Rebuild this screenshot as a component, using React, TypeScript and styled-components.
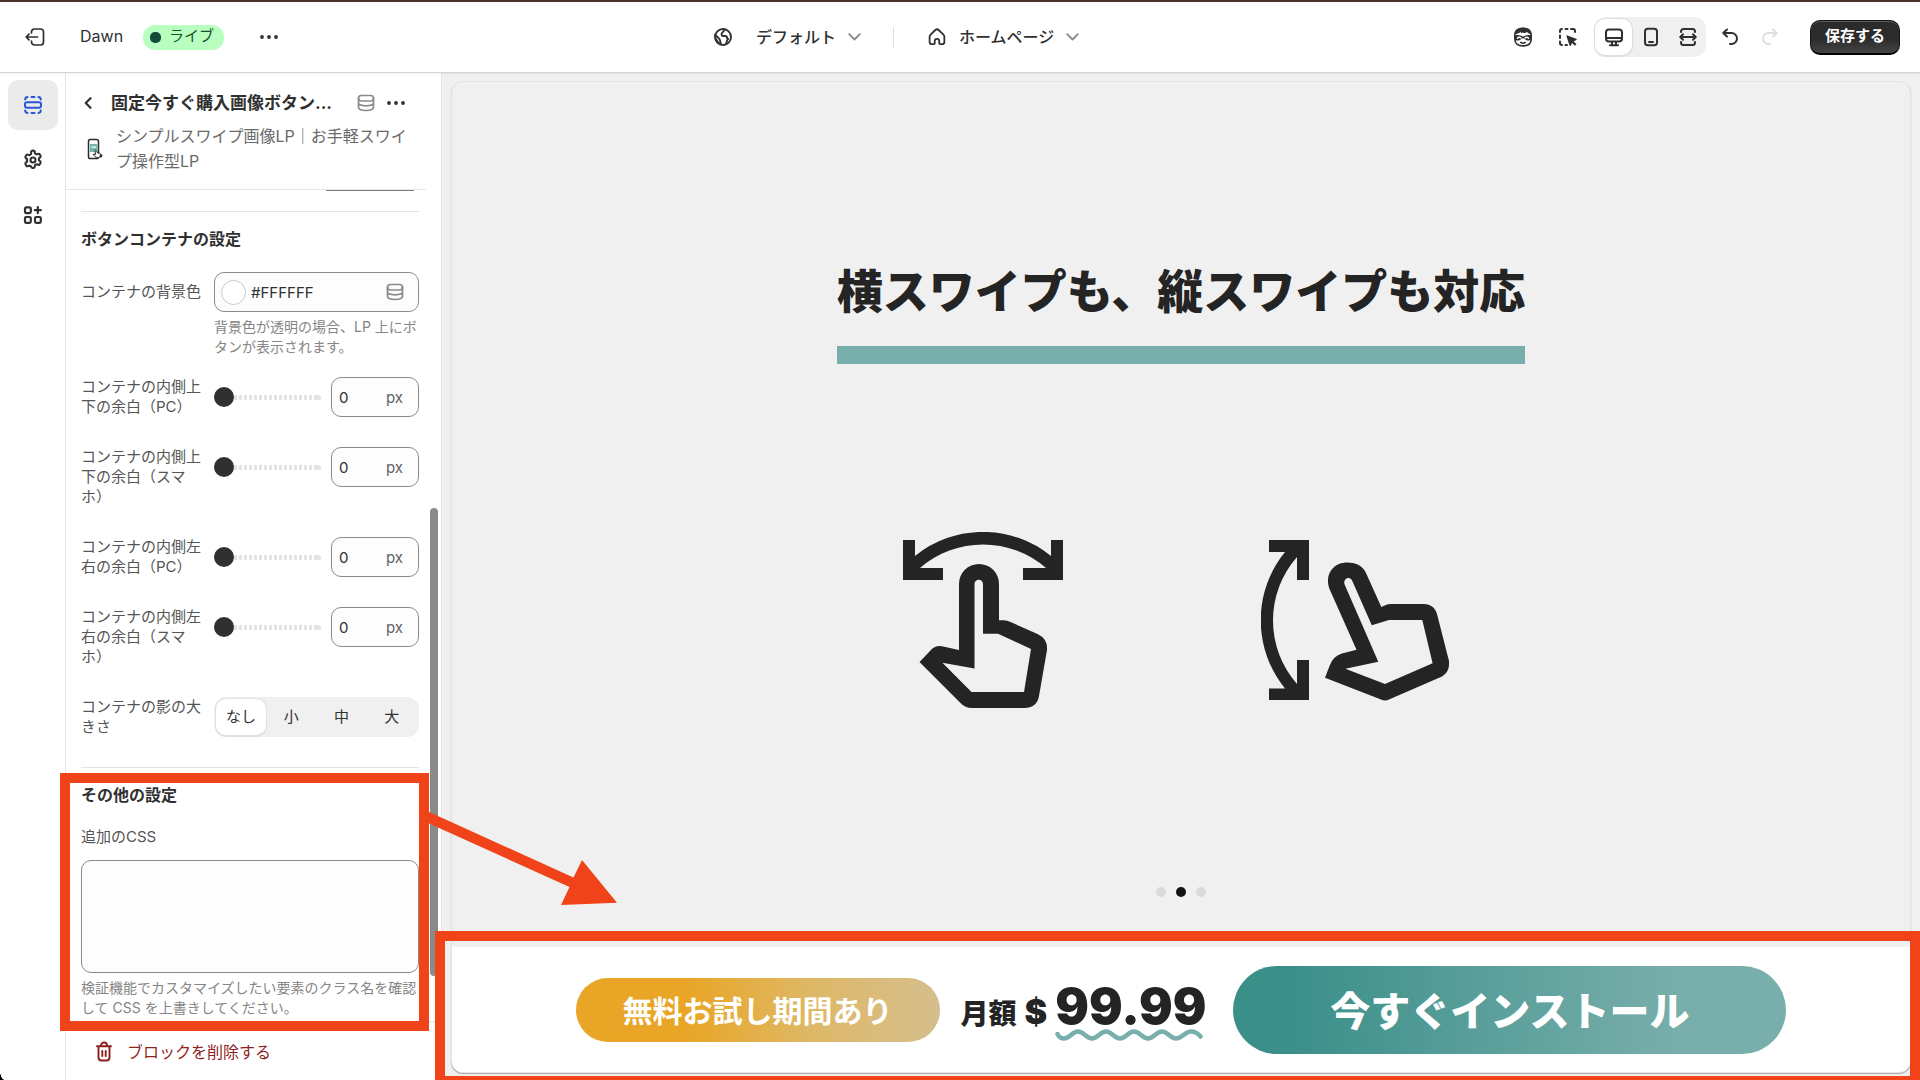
import React, { useState } from "react";
import styled, { createGlobalStyle, css } from "styled-components";

const GlobalStyle = createGlobalStyle`
  *, *::before, *::after { box-sizing: border-box; }
  body {
    margin: 0;
    background: #fff;
    color: #303030;
    font-family: Inter, "Noto Sans CJK JP", sans-serif;
    font-size: 15px;
    overflow: hidden;
  }
  button, input, textarea { font: inherit; color: inherit; }
  svg { display: block; flex: none; }
`;

const Shell = styled.div`
  height: 100vh;
  display: flex;
  flex-direction: column;
  position: relative;
  &::after {
    content: "";
    position: absolute;
    left: 0;
    bottom: 0;
    width: 5px;
    height: 9px;
    background: radial-gradient(ellipse at 100% 0, transparent 68%, #000 72%);
  }
`;

/* ---------- top bar ---------- */
const TopBar = styled.header`
  flex: none;
  height: 73px;
  padding: 0 20px 0 25px;
  display: flex;
  align-items: center;
  justify-content: space-between;
  border-top: 2px solid #4b302b;
  border-bottom: 1px solid #d4d4d4;
  box-shadow: 0 1px 2px rgba(0, 0, 0, 0.06);
  background: #fff;
  z-index: 1;
`;

const BarGroup = styled.div<{ $gap?: number }>`
  display: flex;
  align-items: center;
  gap: ${(p) => p.$gap ?? 0}px;
`;

const IconButton = styled.button<{ $w?: number; $tone?: string }>`
  width: ${(p) => p.$w ?? 20}px;
  height: 30px;
  padding: 0;
  border: 0;
  background: none;
  display: flex;
  align-items: center;
  justify-content: center;
  color: ${(p) => p.$tone ?? "#303030"};
  cursor: pointer;
`;

const ThemeName = styled.span`
  margin-left: 35px;
  padding-bottom: 2px;
  font-size: 16px;
  line-height: 24px;
`;

const LiveBadge = styled.span`
  margin: 0 35px 0 20px;
  height: 25px;
  padding: 0 10px 2px 7px;
  border-radius: 12px;
  background: #b9ffbf;
  color: #14532d;
  display: flex;
  align-items: center;
  gap: 8px;
  font-size: 15px;
  line-height: 24px;
  &::before {
    content: "";
    width: 11px;
    height: 11px;
    margin-top: 2px;
    border-radius: 5px;
    background: #124a3c;
  }
`;

const Picker = styled.button`
  padding: 0;
  border: 0;
  background: none;
  display: flex;
  align-items: center;
  font-size: 16px;
  font-weight: 500;
  line-height: 24px;
  cursor: pointer;
`;

const PickerLabel = styled.span<{ $left: number }>`
  margin: 0 12px 0 ${(p) => p.$left}px;
`;

const BarRule = styled.span`
  width: 1px;
  height: 20px;
  margin: 0 34px 0 32px;
  background: #e0e0e0;
`;

const DeviceGroup = styled.div`
  height: 40px;
  margin: 0 14px 0 17px;
  border-radius: 12px;
  background: #f0f0f0;
  display: flex;
  align-items: center;
`;

const DeviceButton = styled.button<{ $on?: boolean }>`
  width: 37px;
  height: 36px;
  padding: 0;
  border: 0;
  border-radius: 10px;
  background: none;
  display: flex;
  align-items: center;
  justify-content: center;
  ${(p) => p.$on && css`
    background: #fff;
    box-shadow: 0 0 0 1px #dedede, 0 1px 2px rgba(0, 0, 0, 0.25);
  `}
`;

const SaveButton = styled.button`
  width: 90px;
  height: 35px;
  margin-left: 30px;
  padding: 0 0 2px;
  border: 1px solid #161616;
  border-bottom: 2px solid #000;
  border-radius: 10px;
  background: linear-gradient(#2b2b2b 55%, #444);
  box-shadow: inset 0 1px 0 #5a5a5a;
  color: #fff;
  font-size: 15px;
  font-weight: 700;
  line-height: 24px;
`;

/* ---------- body ---------- */
const Body = styled.div`
  flex: 1;
  min-height: 0;
  display: flex;
`;

const Rail = styled.nav`
  flex: none;
  width: 66px;
  padding: 7px 7px 0 8px;
  display: flex;
  flex-direction: column;
  gap: 5px;
  border-right: 1px solid #e3e3e3;
`;

const RailButton = styled.button<{ $on?: boolean }>`
  width: 50px;
  height: 50px;
  padding: 0;
  border: 0;
  border-radius: 10px;
  background: ${(p) => (p.$on ? "#ebebeb" : "none")};
  color: ${(p) => (p.$on ? "#2a56d8" : "#303030")};
  display: flex;
  align-items: center;
  justify-content: center;
`;

const Panel = styled.aside`
  flex: none;
  width: 376px;
  display: flex;
  flex-direction: column;
  border-right: 1px solid #e3e3e3;
`;

const PanelHead = styled.div`
  flex: none;
  height: 117px;
  margin-right: 15px;
  padding: 15px 20px 0 15px;
  border-bottom: 1px solid #e6e6e6;
`;

const TitleRow = styled.div`
  display: flex;
  align-items: center;
  height: 30px;
`;

const PanelTitle = styled.h1`
  flex: 1;
  margin: 0 0 0 15px;
  font-size: 17px;
  font-weight: 700;
  line-height: 30px;
  white-space: nowrap;
`;

const AppRow = styled.div`
  display: flex;
  align-items: center;
  gap: 13px;
  padding-left: 6px;
  margin-top: 6px;
  font-size: 16px;
  line-height: 25px;
  color: #6a6a6a;
  white-space: nowrap;
`;

const PanelScroll = styled.div`
  flex: 1;
  min-height: 0;
  padding: 0 22px 0 15px;
  position: relative;
`;

const ScrollThumb = styled.div`
  position: absolute;
  top: 318px;
  right: 3px;
  width: 8px;
  height: 468px;
  border-radius: 4px;
  background: #8a8a8a;
`;

const PreviousField = styled.div`
  width: 88px;
  height: 1px;
  margin-left: auto;
  margin-right: 5px;
  background: #7d7d7d;
`;

const Section = styled.section<{ $top: number }>`
  margin-top: ${(p) => p.$top}px;
  padding-top: 15px;
  border-top: 1px solid #e3e3e3;
`;

const SectionTitle = styled.h2`
  margin: 0;
  font-size: 16px;
  font-weight: 700;
  line-height: 24px;
`;

const Field = styled.div<{ $first?: boolean }>`
  display: grid;
  grid-template-columns: 133px minmax(0, 1fr);
  align-items: start;
  margin-top: ${(p) => (p.$first ? 21 : 0)}px;
  margin-bottom: ${(p) => (p.$first ? 20 : 30)}px;
`;

const FieldLabel = styled.label<{ $single?: boolean }>`
  line-height: ${(p) => (p.$single ? 40 : 20)}px;
  color: #555;
  white-space: pre-line;
`;

const Help = styled.p`
  margin: 5px 0 0;
  font-size: 14px;
  line-height: 20px;
  color: #858585;
  white-space: pre;
`;

const inputBox = css`
  border: 1px solid #8a8a8a;
  border-radius: 10px;
  background: #fdfdfd;
`;

const ColorBox = styled.div`
  ${inputBox}
  height: 40px;
  padding: 0 14px 0 6px;
  display: flex;
  align-items: center;
  gap: 5px;
  color: #8a8a8a;
`;

const Swatch = styled.span`
  flex: none;
  width: 25px;
  height: 25px;
  border: 1px solid #c9c9c9;
  border-radius: 50%;
  background: #fff;
`;

const BareInput = styled.input`
  flex: 1;
  min-width: 0;
  width: 0;
  padding: 0;
  border: 0;
  outline: 0;
  background: none;
  color: #303030;
`;

const SliderRow = styled.div`
  display: flex;
  align-items: center;
  gap: 10px;
`;

const Slider = styled.input`
  appearance: none;
  flex: 1;
  width: 0;
  min-width: 0;
  height: 20px;
  margin: 0;
  background: none;
  &::-webkit-slider-runnable-track {
    height: 5px;
    border-radius: 0 3px 3px 0;
    background:
      linear-gradient(#e3e3e3, #e3e3e3) right / 7px 5px no-repeat,
      repeating-linear-gradient(to right, #e3e3e3 0 3px, transparent 3px 5px);
  }
  &::-webkit-slider-thumb {
    appearance: none;
    width: 20px;
    height: 20px;
    margin-top: -8px;
    border-radius: 50%;
    background: #303030;
  }
`;

const NumberBox = styled.div`
  ${inputBox}
  flex: none;
  width: 88px;
  height: 40px;
  padding: 0 15px 0 7px;
  display: flex;
  align-items: center;
  color: #616161;
`;

const Segments = styled.div`
  height: 40px;
  padding: 2px;
  border-radius: 12px;
  background: #f0f0f0;
  display: flex;
`;

const Segment = styled.button<{ $on?: boolean }>`
  flex: 1;
  height: 36px;
  padding: 0 0 4px;
  border: 0;
  border-radius: 10px;
  background: none;
  font-size: 15px;
  ${(p) => p.$on && css`
    background: #fff;
    box-shadow: 0 0 0 1px #e2e2e2, 0 1px 2px rgba(0, 0, 0, 0.25);
  `}
`;

const CssLabel = styled.label`
  display: block;
  margin-top: 20px;
  line-height: 20px;
  color: #555;
`;

const CssArea = styled.textarea`
  ${inputBox}
  display: block;
  width: 100%;
  height: 113px;
  margin-top: 13px;
  padding: 8px;
  resize: none;
`;

const PanelFoot = styled.div`
  flex: none;
  height: 59px;
  border-top: 1px solid #e6e6e6;
  padding: 2px 29px 0;
  display: flex;
  align-items: center;
`;

const DeleteButton = styled.button`
  padding: 0;
  border: 0;
  background: none;
  display: flex;
  align-items: center;
  gap: 14px;
  color: #8e1f1f;
  font-size: 16px;
  line-height: 24px;
`;

/* ---------- preview ---------- */
const Canvas = styled.main`
  flex: 1;
  min-width: 0;
  padding: 8px 9px 7px;
  background: #f0f0f0;
  display: flex;
`;

const Preview = styled.div`
  flex: 1;
  border: 1px solid #e4e4e4;
  border-radius: 12px;
  box-shadow: 0 1px 1px rgba(0, 0, 0, 0.3);
  background: #f0f0f0;
  overflow: hidden;
  display: flex;
  flex-direction: column;
`;

const Slide = styled.div`
  flex: 1;
  min-height: 0;
  padding-top: 176px;
  display: flex;
  flex-direction: column;
  align-items: center;
`;

const Headline = styled.h2`
  margin: 0;
  padding-bottom: 22px;
  border-bottom: 18px solid #78aeab;
  color: #242424;
  font-size: 46px;
  font-weight: 900;
  line-height: 66px;
  white-space: nowrap;
`;

const Gestures = styled.div`
  display: flex;
  align-items: flex-start;
  gap: 198px;
  margin-top: 168px;
  margin-right: 11px;
  color: #242424;
`;

const VerticalSlot = styled.div`
  padding-top: 8px;
`;

const Dots = styled.div`
  display: flex;
  gap: 10px;
  margin-top: auto;
  margin-bottom: 50px;
`;

const Dot = styled.button<{ $on?: boolean }>`
  width: 10px;
  height: 10px;
  padding: 0;
  border: 0;
  border-radius: 50%;
  background: ${(p) => (p.$on ? "#121212" : "#dadada")};
`;

const StickyBar = styled.div`
  flex: none;
  height: 125px;
  background: #fff;
  display: flex;
  align-items: center;
  justify-content: center;
`;

const TrialPill = styled.div`
  width: 364px;
  height: 64px;
  border-radius: 32px;
  background: linear-gradient(to right, #e9a526 30%, #deb867 65%, #d5be8d);
  color: #fff;
  font-size: 30px;
  font-weight: 700;
  line-height: 66px;
  text-align: center;
`;

const Price = styled.div`
  margin: 0 27px 0 21px;
  padding-top: 4px;
  display: flex;
  align-items: baseline;
  color: #242424;
  font-size: 28px;
  font-weight: 900;
  line-height: 46px;
`;

const Dollar = styled.span`
  margin: 0 8px;
  font-size: 34px;
`;

const Amount = styled.span`
  display: flex;
  flex-direction: column;
  font-size: 50px;
`;

const BuyButton = styled.button`
  width: 553px;
  height: 88px;
  padding: 4px 0 0;
  border: 0;
  border-radius: 44px;
  background: linear-gradient(to right, #3b8f89 10%, #78aeab 80%);
  color: #fff;
  font-size: 40px;
  font-weight: 900;
  line-height: 84px;
`;

/* ---------- annotations drawn above the page ---------- */
const SettingsCallout = styled.div`
  position: absolute;
  left: 60px;
  top: 773px;
  width: 369px;
  height: 258px;
  border: 10px solid #f04319;
  pointer-events: none;
  z-index: 2;
`;

const PreviewCallout = styled.div`
  position: absolute;
  left: 435px;
  right: 0;
  top: 931px;
  bottom: 0;
  border: 10px solid #f04319;
  border-bottom-width: 4px;
  pointer-events: none;
  z-index: 2;
`;

const ArrowSvg = styled.svg`
  position: absolute;
  left: 425px;
  top: 800px;
  z-index: 2;
  pointer-events: none;
`;

/* ---------- icons ---------- */
type StrokeProps = { size?: number; w?: number; children: React.ReactNode };
const Stroke = ({ size = 20, w = 2, children }: StrokeProps) => (
  <svg width={size} height={size} viewBox="0 0 20 20" fill="none" stroke="currentColor" strokeWidth={w} strokeLinecap="round" strokeLinejoin="round" aria-hidden="true">
    {children}
  </svg>
);

const ExitIcon = () => (
  <Stroke w={1.7}><path d="M6.5 6V5a3 3 0 0 1 3-3H15.5a3 3 0 0 1 3 3v10a3 3 0 0 1-3 3H9.5a3 3 0 0 1-3-3v-1M12.5 10H1.2M4 7.2 1.2 10 4 12.8" /></Stroke>
);
const MoreIcon = () => (
  <svg width="20" height="20" viewBox="0 0 20 20" fill="currentColor" aria-hidden="true">
    <circle cx="3" cy="10" r="1.9" /><circle cx="10" cy="10" r="1.9" /><circle cx="17" cy="10" r="1.9" />
  </svg>
);
const GlobeIcon = () => (
  <Stroke w={1.9}>
    <circle cx="10" cy="10" r="8" />
    <path d="M12 2.5 9 6c-1 1.300-.2 3 1.400 3h1.800c1.200 0 1.800.8 1.800 1.800 0 .7.500 1.200 1.200 1.200M14.500 12.500l-1.500 4.500M2.300 8l3.500 3.300c.6.600 1 1.200 1.200 2l.8 3.700M2.500 11.500l3 4.500" />
  </Stroke>
);
const ChevronDown = () => (
  <svg width="13" height="8" viewBox="0 0 13 8" fill="none" stroke="#8a8a8a" strokeWidth="1.8" strokeLinecap="round" strokeLinejoin="round" aria-hidden="true"><path d="M1.2 1.2 6.5 6.5l5.300-5.300" /></svg>
);
const HomeIcon = () => (
  <Stroke size={18} w={2}>
    <path d="M1.8 9.800c0-1 .4-1.800 1.100-2.500L8.200 2.200a2.600 2.600 0 0 1 3.600 0l5.300 5.100c.7.700 1.100 1.500 1.100 2.500v5.700a2.500 2.500 0 0 1-2.500 2.500h-2.200a1 1 0 0 1-1-1v-2.500a2.500 2.500 0 0 0-5 0V17a1 1 0 0 1-1 1H4.300a2.500 2.500 0 0 1-2.500-2.500z" />
  </Stroke>
);
const SidekickIcon = () => (
  <svg width="20" height="20" viewBox="0 0 20 20" fill="none" stroke="currentColor" strokeWidth="1.6" aria-hidden="true">
    <path d="M1.800 8.500C1.800 4 5 1.300 10 1.300S18.200 4 18.200 8.500V12c0 4.300-3 6.900-8.200 6.900S1.800 16.300 1.800 12z" />
    <path d="M1.500 7.200C1.500 3 4.500.8 10 .8S18.500 3 18.500 7.200c-2-.2-3.500-1-4.500-2.200-1.200 1-2.500 1.300-4 1l.6-1C9 6 8.500 6 7.800 5.900L8 4.800C6 6.500 4 7.200 1.500 7.200z" fill="currentColor" stroke="none" />
    <path d="M1 8.400c3-.6 6-.2 9 1 3-1.200 6-1.600 9-1v3.400c-1.500 2.200-5.700 2.600-7.500 0-.7-.9-2.300-.9-3 0-1.800 2.600-6 2.200-7.500 0z" fill="currentColor" stroke="none" />
    <path d="M4.500 11.200c1-1.200 2.500-1.200 3.500-.2M12 11c1-1 2.500-1 3.500.2" stroke="#fff" strokeWidth="1.400" strokeLinecap="round" />
    <path d="M7.800 15.400c1.300 1 3.100 1 4.400 0" strokeLinecap="round" />
  </svg>
);
const InspectIcon = () => (
  <svg width="20" height="20" viewBox="0 0 20 20" aria-hidden="true">
    <path d="M2 5V4a2 2 0 0 1 2-2M7.500 2h2M13 2h2a2 2 0 0 1 2 2v1M2 8.500v2.500M2 14.500V16a2 2 0 0 0 2 2M7.500 18H9" fill="none" stroke="currentColor" strokeWidth="2" strokeLinecap="round" />
    <path d="M8.500 9.300c-.2-.6.300-1.100.9-.9l8.800 3.300c.7.300.7 1.100.1 1.400l-2.600 1.300 2.800 2.800-1.600 1.600-2.800-2.800-1.200 2.500c-.3.600-1.100.6-1.400 0z" fill="currentColor" />
  </svg>
);
const DesktopIcon = () => (
  <Stroke w={2}><rect x="2" y="2.500" width="16" height="12" rx="3" /><path d="M2.500 11h15M8 15v3M12 15v3M6 18.200h8" /></Stroke>
);
const PhoneIcon = () => (
  <Stroke w={2}><rect x="4" y="1.800" width="12" height="16.400" rx="2.800" /><path d="M8 15h4" /></Stroke>
);
const FullWidthIcon = () => (
  <Stroke w={2}>
    <path d="M3 5V4.500A2.500 2.500 0 0 1 5.500 2h9A2.500 2.500 0 0 1 17 4.500V5M3 15v.5A2.500 2.500 0 0 0 5.500 18h9a2.500 2.500 0 0 0 2.500-2.500V15M3 10h14M5 7.300 2.200 10 5 12.700M15 7.300l2.800 2.700L15 12.700" />
  </Stroke>
);
const UndoIcon = ({ flip = false }: { flip?: boolean }) => (
  <svg width="20" height="20" viewBox="0 0 20 20" fill="none" stroke="currentColor" strokeWidth="2" strokeLinecap="round" strokeLinejoin="round" aria-hidden="true">
    <path transform={flip ? "matrix(-1 0 0 1 20 0)" : undefined} d="M7 2.500 3.200 6 7 9.500M3.500 6h8a5.500 5.500 0 0 1 0 11H10" />
  </svg>
);
const SectionsIcon = () => (
  <Stroke w={2}>
    <rect x="2" y="7.300" width="16" height="5.400" rx="2" />
    <path d="M2.200 4.500A2.600 2.600 0 0 1 4.500 2M8.500 2h3M15.500 2a2.600 2.600 0 0 1 2.300 2.500M2.200 15.500A2.600 2.600 0 0 0 4.500 18M8.500 18h3M15.500 18a2.600 2.600 0 0 0 2.300-2.500" />
  </Stroke>
);
const GearIcon = () => (
  <Stroke size={22} w={1.9}>
    <circle cx="10" cy="10" r="2.300" />
    <path d="M8.400 2.700A1.200 1.200 0 0 1 9.500 1.500h1a1.200 1.200 0 0 1 1.100 1.200l.2 1.300 1.500.9 1.300-.5a1.200 1.200 0 0 1 1.500.5l.7 1.200a1.200 1.200 0 0 1-.3 1.500l-1.100.9v1.700l1.100.9a1.200 1.200 0 0 1 .3 1.500l-.7 1.200a1.200 1.200 0 0 1-1.500.5l-1.300-.5-1.500.9-.2 1.300a1.200 1.200 0 0 1-1.100 1.200h-1a1.200 1.200 0 0 1-1.100-1.200L8.200 16l-1.500-.9-1.300.5a1.200 1.200 0 0 1-1.500-.5l-.7-1.200a1.200 1.200 0 0 1 .3-1.500l1.100-.9V9.200l-1.100-.9a1.200 1.200 0 0 1-.3-1.500l.7-1.200a1.200 1.200 0 0 1 1.500-.5l1.300.5 1.500-.9z" />
  </Stroke>
);
const AppsIcon = () => (
  <Stroke w={2.2}>
    <rect x="2" y="2.300" width="5.800" height="5.800" rx="1.300" />
    <rect x="2" y="12" width="5.800" height="5.800" rx="1.300" />
    <rect x="12" y="12" width="5.800" height="5.800" rx="1.300" />
    <path d="M14.800 2.200v6M11.800 5.200h6" />
  </Stroke>
);
const BackIcon = () => (
  <svg width="15" height="20" viewBox="0 0 15 20" fill="none" stroke="currentColor" strokeWidth="2.200" strokeLinecap="round" strokeLinejoin="round" aria-hidden="true"><path d="M9.500 5.200 4.700 10l4.800 4.800" /></svg>
);
const DatabaseIcon = () => (
  <svg width="18" height="18" viewBox="0 0 18 18" fill="none" stroke="#8a8a8a" strokeWidth="1.700" strokeLinecap="round" aria-hidden="true">
    <rect x="1.500" y="1.500" width="15" height="5.500" rx="2.750" />
    <path d="M1.500 4.300v9c0 1.900 3.200 3.200 7.500 3.200s7.500-1.300 7.500-3.200v-9M1.500 8.800c0 1.900 3.200 3 7.500 3s7.500-1.100 7.500-3" />
  </svg>
);
const AppLogo = () => (
  <svg width="16" height="22" viewBox="0 0 16 22" aria-hidden="true">
    <rect x="1.500" y="1.500" width="10" height="19" rx="1.800" fill="#fff" stroke="#2b2b2b" strokeWidth="1.500" />
    <rect x="3" y="6" width="7.500" height="8" fill="#6fb5b0" />
    <path d="M4.500 9.200h4.500" stroke="#e4f3f1" strokeWidth="1.500" />
    <path d="M8 12.500c.8-.5 1.500 0 1.800.8l.7 1.700 2 .3c.9.200 1.300.8 1.100 1.600l-.4 2c-1.500 1-4 1-5.400-.6L6 16.200l2.500.2z" fill="#fff" stroke="#2b2b2b" strokeWidth="1" />
    <path d="m13 16 2.500.7-.6 2.600-2.400.3z" fill="#2b2b2b" />
  </svg>
);
const TrashIcon = () => (
  <svg width="18" height="22" viewBox="0 0 18 22" fill="none" stroke="currentColor" strokeWidth="1.900" strokeLinecap="round" strokeLinejoin="round" aria-hidden="true">
    <path d="M2 5.200h14M6 5V4.500a3 3 0 0 1 6 0V5M3.500 5.500v11a3 3 0 0 0 3 3h5a3 3 0 0 0 3-3v-11M7.300 10v5M10.700 10v5" />
  </svg>
);

const SwipeHorizontal = () => (
  <svg width="160" height="176" viewBox="23 22 160 176" fill="currentColor" role="img" aria-label="横スワイプ">
    <path d="M23 30H35V46A108 108 0 0 1 171 46V30H183V70H143V58H166A96 96 0 0 0 40 58H63V70H23Z" />
    <path fillRule="evenodd" d="M79 74a20 20 0 0 1 40 0V110.300h5q3 0 6 1.500L157.500 124Q168 129 167 140L159 186Q157 198 144 198H92Q85 198 80.500 193L39.500 152 50 141Q55 135 62 136.300L79 140ZM94.500 74V158.500L62.400 152.700 91.500 182H144L151 139 118 123.700H103V74a4.200 4.200 0 0 0-8.500 0Z" />
  </svg>
);
const SwipeVertical = () => (
  <svg width="188" height="161" viewBox="381 30 188 161" fill="currentColor" role="img" aria-label="縦スワイプ">
    <path d="M389 30H429V70H417V47A96 96 0 0 0 417 174V150H429V190H389V178.500H405A108 108 0 0 1 405 42H389Z" />
    <path fillRule="evenodd" d="M449.500 79C445 67 451 57 459 54S481 52 486 63L501.300 97 507 94.500Q508 94 511 94H543.500Q555 94 557.500 106L569 151Q570 162 562 166.500L509 189.500Q505 191.500 501 189.500L445 167.700 449.500 156Q453 146 462 143.500L476.500 139.700ZM464.600 74.500 498.300 151.700 465.400 158.700 505 174 552.600 153.300 542.300 110H509L491.800 115.300 472.300 71C470 65 462.500 69 464.600 74.500Z" />
  </svg>
);
const Wave = () => (
  <svg width="148" height="12" viewBox="0 0 148 12" fill="none" stroke="#78aeab" strokeWidth="4.500" strokeLinecap="round" aria-hidden="true">
    <path d="M2.500 5C4 8 6 9.500 9 9.500C15 9.500 17 2.500 23 2.500S31 9.500 37 9.500 45 2.500 51 2.500 59 9.500 65 9.500 73 2.500 79 2.500 87 9.500 93 9.500 101 2.500 107 2.500 115 9.500 121 9.500 130 2.500 136 2.500C140 2.500 143 4.500 145.500 7.500" />
  </svg>
);

/* ---------- page ---------- */
const paddings = [
  { id: "pad-y-pc", label: "コンテナの内側上\n下の余白（PC）" },
  { id: "pad-y-sp", label: "コンテナの内側上\n下の余白（スマ\nホ）" },
  { id: "pad-x-pc", label: "コンテナの内側左\n右の余白（PC）" },
  { id: "pad-x-sp", label: "コンテナの内側左\n右の余白（スマ\nホ）" },
];

const SpacingField = ({ id, label }: { id: string; label: string }) => {
  const [value, setValue] = useState("0");
  return (
    <Field>
      <FieldLabel htmlFor={id}>{label}</FieldLabel>
      <SliderRow>
        <Slider type="range" min="0" max="100" value={value} aria-label={label} onChange={(e) => setValue(e.target.value)} />
        <NumberBox>
          <BareInput id={id} value={value} onChange={(e) => setValue(e.target.value)} />
          px
        </NumberBox>
      </SliderRow>
    </Field>
  );
};

export default function App() {
  const [shadow, setShadow] = useState("なし");
  return (
    <>
      <GlobalStyle />
      <Shell>
        <TopBar>
          <BarGroup>
            <IconButton aria-label="終了"><ExitIcon /></IconButton>
            <ThemeName>Dawn</ThemeName>
            <LiveBadge>ライブ</LiveBadge>
            <IconButton aria-label="その他"><MoreIcon /></IconButton>
          </BarGroup>
          <BarGroup>
            <Picker>
              <GlobeIcon />
              <PickerLabel $left={23}>デフォルト</PickerLabel>
              <ChevronDown />
            </Picker>
            <BarRule />
            <Picker>
              <HomeIcon />
              <PickerLabel $left={13}>ホームページ</PickerLabel>
              <ChevronDown />
            </Picker>
          </BarGroup>
          <BarGroup>
            <BarGroup $gap={25}>
              <IconButton aria-label="アシスタント"><SidekickIcon /></IconButton>
              <IconButton aria-label="選択"><InspectIcon /></IconButton>
            </BarGroup>
            <DeviceGroup>
              <DeviceButton $on aria-label="デスクトップ"><DesktopIcon /></DeviceButton>
              <DeviceButton aria-label="モバイル"><PhoneIcon /></DeviceButton>
              <DeviceButton aria-label="全画面"><FullWidthIcon /></DeviceButton>
            </DeviceGroup>
            <BarGroup $gap={20}>
              <IconButton aria-label="元に戻す"><UndoIcon /></IconButton>
              <IconButton aria-label="やり直す" $tone="#dedede"><UndoIcon flip /></IconButton>
            </BarGroup>
            <SaveButton>保存する</SaveButton>
          </BarGroup>
        </TopBar>

        <Body>
          <Rail>
            <RailButton $on aria-label="セクション"><SectionsIcon /></RailButton>
            <RailButton aria-label="設定"><GearIcon /></RailButton>
            <RailButton aria-label="アプリ"><AppsIcon /></RailButton>
          </Rail>

          <Panel>
            <PanelHead>
              <TitleRow>
                <IconButton $w={15} aria-label="戻る"><BackIcon /></IconButton>
                <PanelTitle>固定今すぐ購入画像ボタン...</PanelTitle>
                <BarGroup $gap={11}>
                  <DatabaseIcon />
                  <IconButton aria-label="その他"><MoreIcon /></IconButton>
                </BarGroup>
              </TitleRow>
              <AppRow>
                <AppLogo />
                <span>シンプルスワイプ画像LP｜お手軽スワイ<br />プ操作型LP</span>
              </AppRow>
            </PanelHead>

            <PanelScroll>
              <PreviousField />
              <Section $top={20}>
                <SectionTitle>ボタンコンテナの設定</SectionTitle>
                <Field $first>
                  <FieldLabel $single htmlFor="bg">コンテナの背景色</FieldLabel>
                  <div>
                    <ColorBox>
                      <Swatch />
                      <BareInput id="bg" defaultValue="#FFFFFF" />
                      <DatabaseIcon />
                    </ColorBox>
                    <Help>{"背景色が透明の場合、LP 上にボ\nタンが表示されます。"}</Help>
                  </div>
                </Field>
                {paddings.map((p) => <SpacingField key={p.id} {...p} />)}
                <Field>
                  <FieldLabel as="span">{"コンテナの影の大\nきさ"}</FieldLabel>
                  <Segments>
                    {["なし", "小", "中", "大"].map((s) => (
                      <Segment key={s} $on={s === shadow} onClick={() => setShadow(s)}>{s}</Segment>
                    ))}
                  </Segments>
                </Field>
              </Section>
              <Section $top={0}>
                <SectionTitle>その他の設定</SectionTitle>
                <CssLabel htmlFor="css">追加のCSS</CssLabel>
                <CssArea id="css" />
                <Help>{"検証機能でカスタマイズしたい要素のクラス名を確認\nして CSS を上書きしてください。"}</Help>
              </Section>
              <ScrollThumb />
            </PanelScroll>

            <PanelFoot>
              <DeleteButton><TrashIcon />ブロックを削除する</DeleteButton>
            </PanelFoot>
          </Panel>

          <Canvas>
            <Preview>
              <Slide>
                <Headline>横スワイプも、縦スワイプも対応</Headline>
                <Gestures>
                  <SwipeHorizontal />
                  <VerticalSlot><SwipeVertical /></VerticalSlot>
                </Gestures>
                <Dots>
                  <Dot aria-label="1" />
                  <Dot $on aria-label="2" />
                  <Dot aria-label="3" />
                </Dots>
              </Slide>
              <StickyBar>
                <TrialPill>無料お試し期間あり</TrialPill>
                <Price>
                  月額<Dollar>$</Dollar>
                  <Amount>99.99<Wave /></Amount>
                </Price>
                <BuyButton>今すぐインストール</BuyButton>
              </StickyBar>
            </Preview>
          </Canvas>
        </Body>

        <SettingsCallout />
        <ArrowSvg width="195" height="110" viewBox="425 800 195 110" fill="#f04319" aria-hidden="true">
          <path d="M428 811.500 573.500 877.500 582 860 617 902.700 561 905 569.500 887 428 823Z" />
        </ArrowSvg>
        <PreviewCallout />
      </Shell>
    </>
  );
}
